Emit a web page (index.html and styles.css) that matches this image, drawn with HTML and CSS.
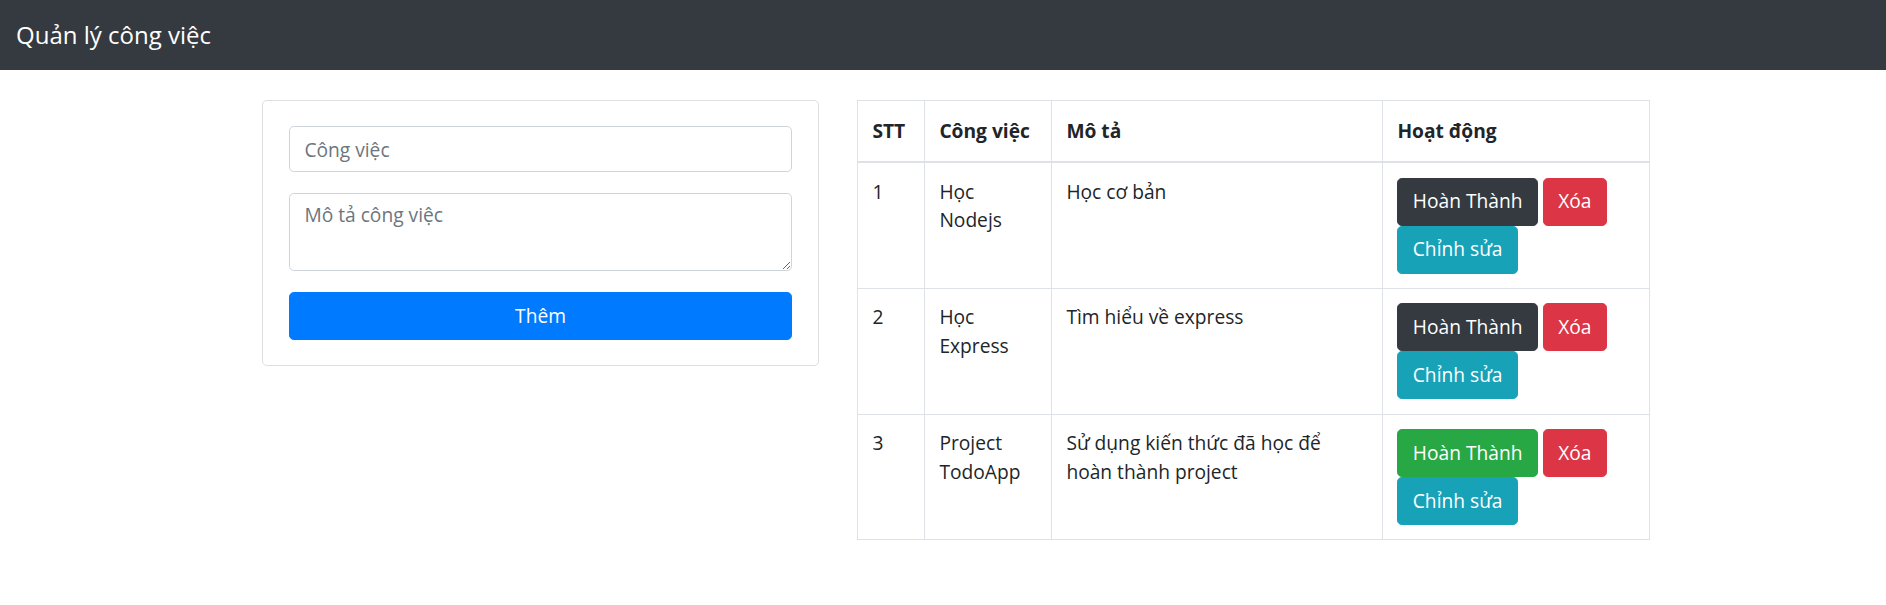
FILE: index.html
```html
<!DOCTYPE html>
<html lang="vi">
<head>
<meta charset="utf-8">
<title>Quản lý công việc</title>
<link rel="stylesheet" href="styles.css">
</head>
<body>
<nav class="navbar">
  <span class="brand">Quản lý công việc</span>
</nav>
<main class="layout">
  <section class="card">
    <form class="form">
      <input class="field" type="text" placeholder="Công việc">
      <textarea class="field area" placeholder="Mô tả công việc"></textarea>
      <button type="button" class="btn btn-primary btn-block">Thêm</button>
    </form>
  </section>
  <table class="table">
    <colgroup>
      <col class="c-stt"><col class="c-job"><col class="c-desc"><col class="c-act">
    </colgroup>
    <thead>
      <tr><th>STT</th><th>Công việc</th><th>Mô tả</th><th>Hoạt động</th></tr>
    </thead>
    <tbody>
      <tr>
        <td>1</td><td>Học Nodejs</td><td>Học cơ bản</td>
        <td><div class="actions"><button class="btn btn-dark">Hoàn Thành</button><button class="btn btn-danger">Xóa</button><button class="btn btn-info">Chỉnh sửa</button></div></td>
      </tr>
      <tr>
        <td>2</td><td>Học Express</td><td>Tìm hiểu về express</td>
        <td><div class="actions"><button class="btn btn-dark">Hoàn Thành</button><button class="btn btn-danger">Xóa</button><button class="btn btn-info">Chỉnh sửa</button></div></td>
      </tr>
      <tr>
        <td>3</td><td>Project TodoApp</td><td>Sử dụng kiến thức đã học để hoàn thành project</td>
        <td><div class="actions"><button class="btn btn-success">Hoàn Thành</button><button class="btn btn-danger">Xóa</button><button class="btn btn-info">Chỉnh sửa</button></div></td>
      </tr>
    </tbody>
  </table>
</main>
</body>
</html>
```
FILE: styles.css
```css
* { box-sizing: border-box; }
html, body { margin: 0; padding: 0; background: #fff; }
body {
  font-family: "Open Sans", "Noto Sans", sans-serif;
  font-size: 19.2px;
  line-height: 1.5;
  color: #212529;
}
.navbar {
  height: 70px;
  background: #343a40;
  display: flex;
  align-items: center;
  padding: 0 16px;
}
.brand {
  color: #fff;
  font-size: 24px;
  line-height: 36px;
}
.layout {
  display: flex;
  align-items: flex-start;
  gap: 38px;
  padding: 30px 0 0 262px;
}
.card {
  width: 557px;
  border: 1px solid rgba(0,0,0,.125);
  border-radius: 4.8px;
  padding: 25px 26px;
}
.form {
  display: flex;
  flex-direction: column;
  gap: 21px;
}
.field {
  display: block;
  width: 100%;
  height: 46px;
  padding: 7.2px 14.4px;
  font-family: inherit;
  font-size: 19.2px;
  line-height: 1.5;
  color: #495057;
  border: 1px solid #ced4da;
  border-radius: 4.8px;
  background: #fff;
}
.field::placeholder { color: #6c757d; opacity: 1; }
.area { height: 78px; resize: vertical; }
.btn {
  display: inline-block;
  font-family: inherit;
  font-size: 19.2px;
  line-height: 1.5;
  padding: 8.6px 14.4px;
  border: 1px solid transparent;
  border-radius: 4.8px;
  color: #fff;
  cursor: pointer;
  white-space: nowrap;
}
.btn-block { width: 100%; display: block; padding-top: 8.5px; padding-bottom: 8.5px; }
.btn-primary { background: #007bff; border-color: #007bff; }
.btn-dark { background: #343a40; border-color: #343a40; }
.btn-danger { background: #dc3545; border-color: #dc3545; }
.btn-info { background: #17a2b8; border-color: #17a2b8; }
.btn-success { background: #28a745; border-color: #28a745; }
.table {
  width: 792px;
  table-layout: fixed;
  border-collapse: collapse;
  color: #212529;
}
.c-stt { width: 67px; }
.c-job { width: 127px; }
.c-desc { width: 331px; }
.c-act { width: 267px; }
.table th, .table td {
  border: 1px solid #dee2e6;
  padding: 14.4px;
  text-align: left;
  vertical-align: top;
}
.table th {
  font-weight: 700;
  vertical-align: bottom;
  border-bottom: 2px solid #dee2e6;
  padding-top: 15.7px;
  padding-bottom: 15.7px;
}
.actions {
  display: flex;
  flex-wrap: wrap;
  column-gap: 5px;
  row-gap: 0;
}
```
